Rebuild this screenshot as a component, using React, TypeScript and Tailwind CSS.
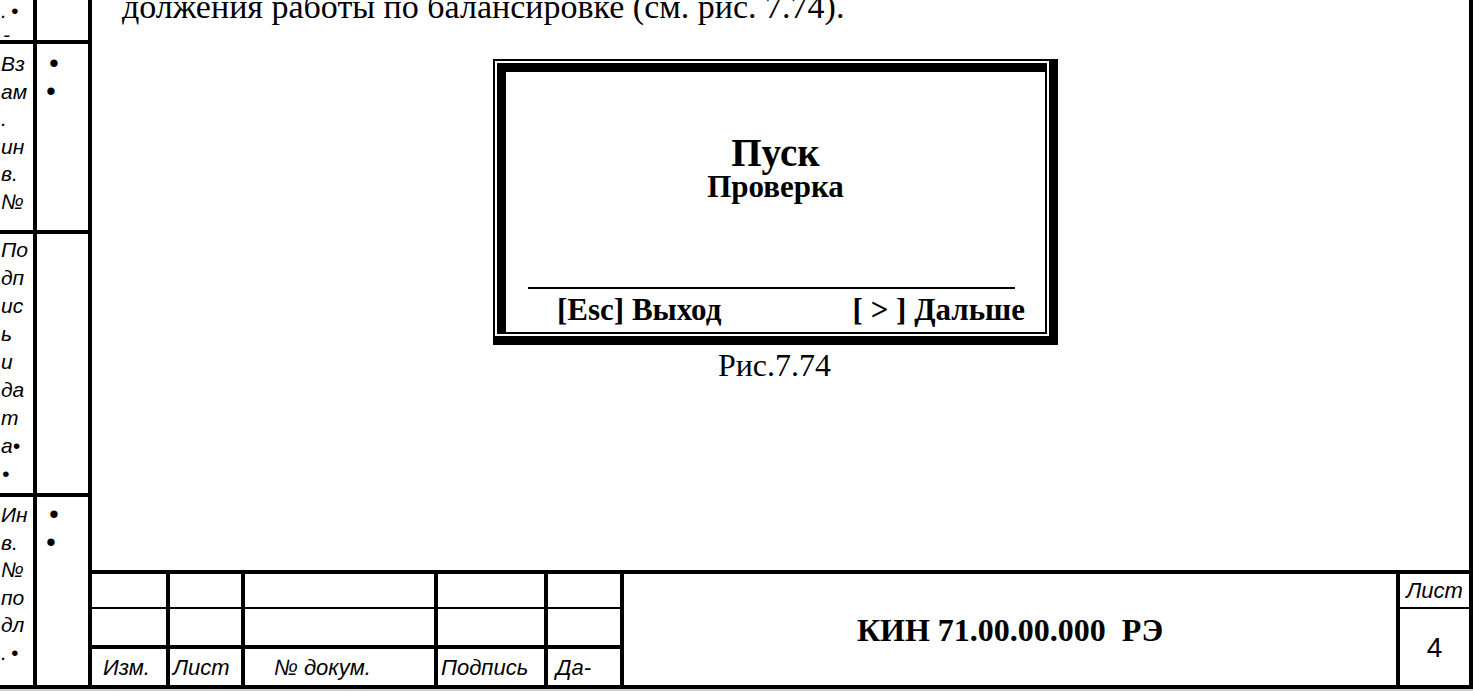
const sans = "font-['Liberation_Sans',Arial,sans-serif] italic";
const serif = "font-['Liberation_Serif','Times_New_Roman',serif]";

type SideLine = { text: string; pad?: string };

function SideCell({
  left,
  right,
  className,
  leftClass,
}: {
  left: SideLine[];
  right?: SideLine[];
  className: string;
  leftClass: string;
}) {
  return (
    <div className={`flex overflow-hidden border-black ${className}`}>
      <div className={`w-[37px] shrink-0 border-r-4 border-black ${leftClass}`}>
        {left.map((line, index) => (
          <div key={index} className={`whitespace-pre ${line.pad ?? 'pl-[1px]'}`}>
            {line.text}
          </div>
        ))}
      </div>
      <div className={`flex-1 ${leftClass}`}>
        {(right ?? []).map((line, index) => (
          <div key={index} className={`text-[27px] ${line.pad ?? 'pl-[10px]'}`}>
            {line.text}
          </div>
        ))}
      </div>
    </div>
  );
}

const labels = [
  { text: 'Изм.', className: 'pl-[11px]' },
  { text: 'Лист', className: 'pl-[3px]' },
  { text: '№ докум.', className: 'pl-[29px]' },
  { text: 'Подпись', className: 'pl-[3px]' },
  { text: 'Да-', className: 'pl-[8px]' },
];

export default function App() {
  return (
    <div className="flex h-[691px] w-[1473px] flex-col overflow-hidden bg-white text-black">
      <div className="flex min-h-0 flex-1 border-b-4 border-black">
        <aside className={`flex w-[92px] shrink-0 flex-col border-r-4 border-black text-[21px] leading-[27.5px] ${sans}`}>
          <SideCell
            className="h-[44px] border-b-4"
            leftClass="-mt-[1px] leading-[24px]"
            left={[{ text: '.\u2009•', pad: 'pl-[1px]' }, { text: '-', pad: 'pl-[3px]' }]}
          />
          <SideCell
            className="h-[190px] border-b-4"
            leftClass="pt-[6px]"
            left={[{ text: 'Вз' }, { text: 'ам' }, { text: '.' }, { text: 'ин' }, { text: 'в.' }, { text: '№' }]}
            right={[{ text: '•', pad: 'pl-[12px]' }, { text: '•', pad: 'pl-[9px]' }]}
          />
          <SideCell
            className="h-[263px] border-b-4"
            leftClass="pt-[2px] leading-[28px]"
            left={[
              { text: 'По' },
              { text: 'дп' },
              { text: 'ис' },
              { text: 'ь' },
              { text: 'и' },
              { text: 'да' },
              { text: 'т' },
              { text: 'а•' },
              { text: '•', pad: 'pl-[2px]' },
            ]}
          />
          <SideCell
            className="flex-1"
            leftClass="pt-[4px]"
            left={[{ text: 'Ин' }, { text: 'в.' }, { text: '№' }, { text: 'по' }, { text: 'дл' }, { text: '.\u2009•' }]}
            right={[{ text: '•', pad: 'pl-[12px]' }, { text: '•', pad: 'pl-[9px]' }]}
          />
        </aside>

        <main className="flex min-w-0 flex-1 flex-col border-r-4 border-black">
          <p className={`-mt-[10px] whitespace-nowrap pl-[30px] text-[34px] leading-[34px] ${serif}`}>
            должения работы по балансировке (см. рис. 7.74).
          </p>

          <div className="ml-[401px] mt-[35px] w-[565px] border-b-[9px] border-l-2 border-r-[9px] border-t-2 border-black p-[2px]">
            <div className={`flex h-[271px] flex-col border-b-2 border-l-[9px] border-r-2 border-t-[9px] border-black font-bold ${serif}`}>
              <div className="pt-[61px] text-center">
                <div className="text-[39px] leading-[39px]">Пуск</div>
                <div className="text-[31px] leading-[29px]">Проверка</div>
              </div>
              <div className="ml-[22px] mr-[30px] mt-[86px] border-t-2 border-black" />
              <div className="mt-[6px] flex justify-between whitespace-pre pl-[51px] pr-[20px] text-[31px] leading-[30px]">
                <span>[Esc] Выход</span>
                <span>[ &gt; ] Дальше</span>
              </div>
            </div>
          </div>

          <p className={`mt-[4px] pr-[12px] text-center text-[32px] leading-[32px] ${serif}`}>Рис.7.74</p>

          <div className="mt-auto grid grid-cols-[74px_75px_193px_110px_76px_1fr_73px] grid-rows-[35px_40px_36px] border-t-4 border-black">
            {[0, 1, 2].map((row) =>
              labels.map((label, col) => (
                <div
                  key={`${row}-${col}`}
                  style={{ gridRow: row + 1, gridColumn: col + 1 }}
                  className={`flex items-center border-black text-[22px] ${sans} ${col > 0 ? 'border-l-4' : ''} ${
                    row === 0 ? 'border-b-2' : row === 1 ? 'border-b-4' : ''
                  } ${row === 2 ? label.className : ''}`}
                >
                  {row === 2 ? label.text : null}
                </div>
              )),
            )}
            <div className={`col-start-6 row-span-3 row-start-1 flex items-center justify-center whitespace-pre border-l-4 border-black text-[32px] font-bold ${serif}`}>
              КИН 71.00.00.000  РЭ
            </div>
            <div className={`col-start-7 row-start-1 flex items-center justify-center border-b-2 border-l-4 border-black text-[22px] ${sans}`}>
              Лист
            </div>
            <div className="col-start-7 row-span-2 row-start-2 flex items-center justify-center border-l-4 border-black pt-[2px] font-['Liberation_Sans',Arial,sans-serif] text-[28px]">
              4
            </div>
          </div>
        </main>
      </div>
      <div className="h-[2px] bg-[#cfcfcf]" />
    </div>
  );
}
